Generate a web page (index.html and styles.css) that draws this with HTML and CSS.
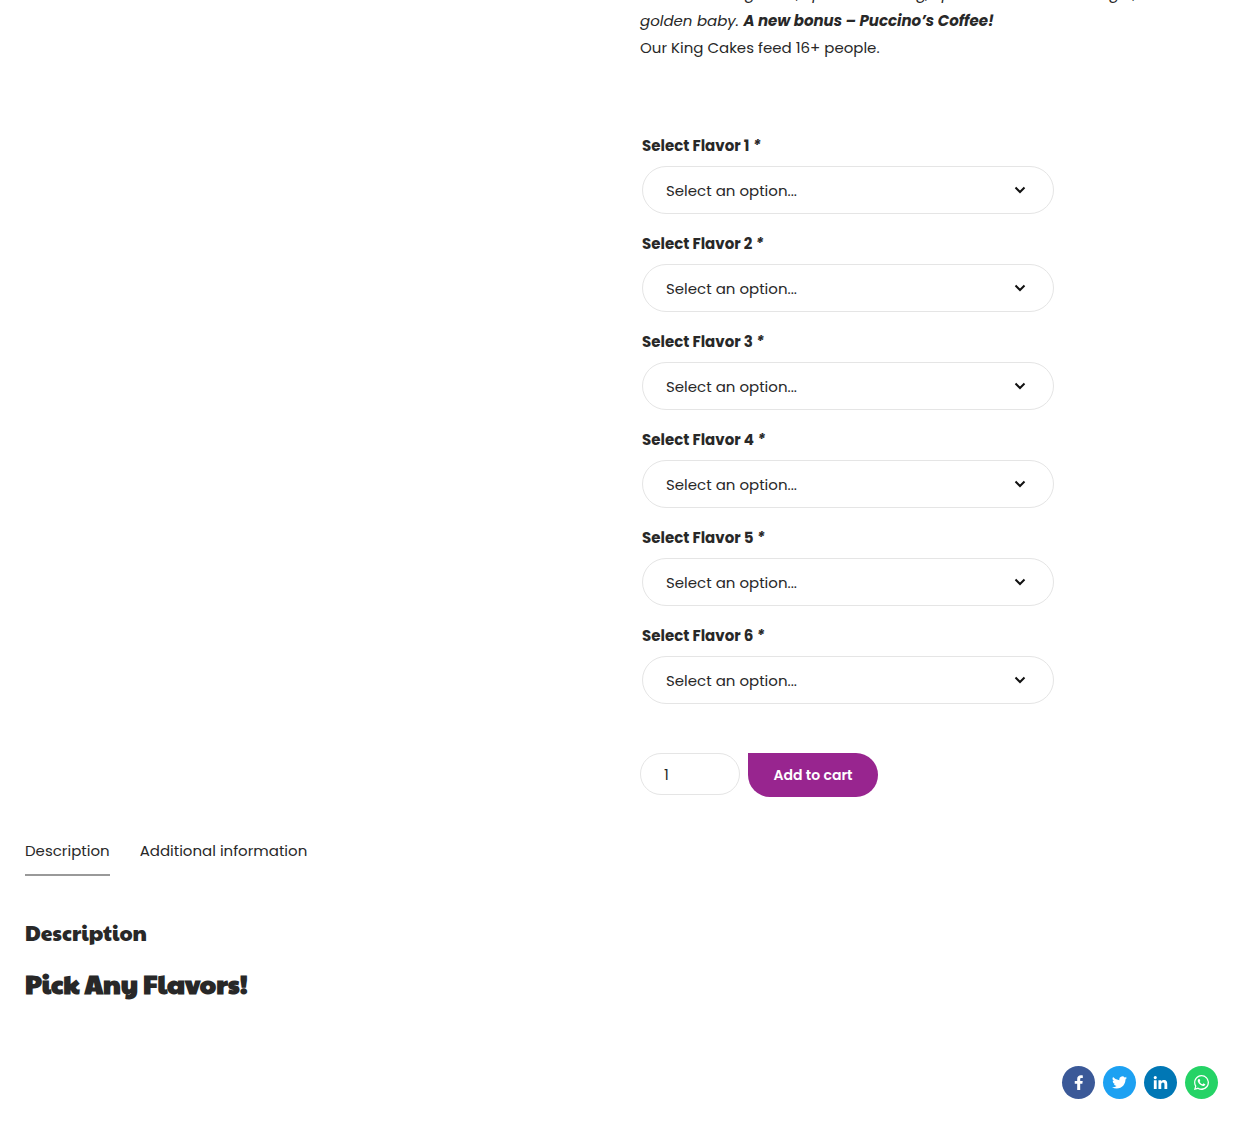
FILE: index.html
```html
<!DOCTYPE html>
<html lang="en">
<head>
<meta charset="utf-8">
<meta name="viewport" content="width=device-width, initial-scale=1">
<title>King Cake</title>
<link rel="stylesheet" href="styles.css">
</head>
<body>
<main class="page">
  <section class="product">
    <div class="summary">
      <div class="excerpt">
        <p><em>Cake with icing extra, sprinkles &amp; icing, special Mardi Gras &amp; a gift,<br>golden baby. <strong>A new bonus – Puccino’s Coffee!</strong></em></p>
        <p>Our King Cakes feed 16+ people.</p>
      </div>
      <form class="cart">
        <div class="field">
          <label for="flavor-1">Select Flavor 1 <em>*</em></label>
          <div class="select"><select id="flavor-1"><option>Select an option...</option></select><svg class="chevron" viewBox="0 0 12 8"><path d="M1.500 1.500 6 6l4.500-4.500"/></svg></div>
        </div>
        <div class="field">
          <label for="flavor-2">Select Flavor 2 <em>*</em></label>
          <div class="select"><select id="flavor-2"><option>Select an option...</option></select><svg class="chevron" viewBox="0 0 12 8"><path d="M1.500 1.500 6 6l4.500-4.500"/></svg></div>
        </div>
        <div class="field">
          <label for="flavor-3">Select Flavor 3 <em>*</em></label>
          <div class="select"><select id="flavor-3"><option>Select an option...</option></select><svg class="chevron" viewBox="0 0 12 8"><path d="M1.500 1.500 6 6l4.500-4.500"/></svg></div>
        </div>
        <div class="field">
          <label for="flavor-4">Select Flavor 4 <em>*</em></label>
          <div class="select"><select id="flavor-4"><option>Select an option...</option></select><svg class="chevron" viewBox="0 0 12 8"><path d="M1.500 1.500 6 6l4.500-4.500"/></svg></div>
        </div>
        <div class="field">
          <label for="flavor-5">Select Flavor 5 <em>*</em></label>
          <div class="select"><select id="flavor-5"><option>Select an option...</option></select><svg class="chevron" viewBox="0 0 12 8"><path d="M1.500 1.500 6 6l4.500-4.500"/></svg></div>
        </div>
        <div class="field">
          <label for="flavor-6">Select Flavor 6 <em>*</em></label>
          <div class="select"><select id="flavor-6"><option>Select an option...</option></select><svg class="chevron" viewBox="0 0 12 8"><path d="M1.500 1.500 6 6l4.500-4.500"/></svg></div>
        </div>
        <div class="buy">
          <input class="quantity" type="text" inputmode="numeric" value="1" aria-label="Quantity">
          <button class="add" type="submit">Add to cart</button>
        </div>
      </form>
    </div>
  </section>

  <nav class="tabs">
    <a class="tab active" href="#description">Description</a>
    <a class="tab" href="#additional">Additional information</a>
  </nav>
  <section class="description" id="description">
    <h2>Description</h2>
    <h1>Pick Any Flavors!</h1>
  </section>

  <div class="share">
    <a class="facebook" href="#facebook" aria-label="Facebook"><svg viewBox="0 0 16 16"><path d="M9.800 16V9.200h2.300l.4-2.900H9.800V4.700c0-.9.300-1.400 1.400-1.400h1.400V.5C12.300.4 11.500.3 10.600.3 8.300.3 6.600 1.600 6.600 4.200v2.100H4v2.900h2.600V16z"/></svg></a>
    <a class="twitter" href="#twitter" aria-label="Twitter"><svg viewBox="0 0 16 16"><path d="M16 3.040a6.500 6.500 0 0 1-1.890.52A3.300 3.300 0 0 0 15.560 1.740a6.600 6.600 0 0 1-2.080.8A3.280 3.280 0 0 0 7.880 5.530 9.320 9.320 0 0 1 1.110 2.100a3.280 3.280 0 0 0 1.020 4.380A3.260 3.260 0 0 1 .64 6.070v.04a3.280 3.280 0 0 0 2.640 3.220 3.200 3.200 0 0 1-1.480.05 3.280 3.280 0 0 0 3.070 2.280A6.590 6.590 0 0 1 0 13.020a9.290 9.290 0 0 0 5.030 1.480c6.040 0 9.340-5 9.340-9.340v-.42A6.700 6.700 0 0 0 16 3.040z"/></svg></a>
    <a class="linkedin" href="#linkedin" aria-label="LinkedIn"><svg viewBox="0 0 16 16"><path d="M.9 5.600h3V15h-3zM2.400 1a1.700 1.700 0 1 1 0 3.400A1.700 1.700 0 0 1 2.400 1zM5.800 5.600h2.900v1.300c.5-.9 1.500-1.500 2.900-1.500 3 0 3.600 1.900 3.600 4.500V15h-3v-4.600c0-1.100 0-2.500-1.600-2.500s-1.800 1.200-1.800 2.400V15h-3z"/></svg></a>
    <a class="whatsapp" href="#whatsapp" aria-label="WhatsApp"><svg viewBox="0 0 16 16"><path d="M13.600 2.300A7.850 7.850 0 0 0 8 0a7.930 7.930 0 0 0-6.870 11.890L0 16l4.200-1.100A7.930 7.930 0 0 0 13.600 2.300zM8 14.520a6.600 6.600 0 0 1-3.360-.92l-.24-.14-2.490.65.660-2.430-.16-.25A6.590 6.590 0 1 1 8 14.520zm3.610-4.930c-.2-.1-1.170-.58-1.350-.64-.18-.07-.32-.1-.45.1-.13.200-.51.640-.63.770-.11.130-.23.150-.43.050-.2-.1-.84-.31-1.590-.98-.59-.53-.98-1.180-1.100-1.380-.11-.2-.01-.31.090-.41.090-.09.200-.23.300-.35.100-.11.130-.2.200-.33.060-.13.030-.25-.02-.35-.05-.1-.45-1.070-.61-1.470-.16-.39-.33-.33-.45-.34h-.38c-.13 0-.35.050-.53.250-.18.200-.69.680-.69 1.650s.71 1.910.81 2.050c.1.130 1.400 2.130 3.380 2.990 1.990.85 1.990.57 2.350.53.360-.03 1.170-.48 1.340-.94.160-.46.160-.86.110-.94-.05-.08-.18-.13-.38-.23z"/></svg></a>
  </div>
</main>
</body>
</html>
```
FILE: styles.css
```css
* { box-sizing: border-box; }

body {
  margin: 0;
  background: #fff;
  color: #282828;
  font: 15px/27px Poppins, Inter, "Open Sans", sans-serif;
  overflow-x: hidden;
}

.page { padding: 0 25px; }

.product {
  display: grid;
  grid-template-columns: 1fr 1fr;
  column-gap: 30px;
}

.summary { grid-column: 2; }

/* The page starts part-way through the product excerpt. */
.excerpt { margin-top: -20px; }
.excerpt p { margin: 0; }

.cart { padding-top: 71px; }

.field {
  max-width: 416px;
  padding: 0 2px;
  margin-bottom: 16px;
}

.field label {
  display: block;
  margin-bottom: 7px;
  font-weight: 700;
}

.select { display: grid; align-items: center; }
.select > * { grid-area: 1 / 1; }

.select select {
  appearance: none;
  width: 100%;
  height: 48px;
  padding: 0 48px 0 23px;
  border: 1px solid #e5e5e5;
  border-radius: 24px;
  background: #fff;
  color: inherit;
  font: inherit;
}

.chevron {
  justify-self: end;
  width: 12px;
  height: 8px;
  margin-right: 28px;
  fill: none;
  stroke: #111;
  stroke-width: 2;
  pointer-events: none;
}

.buy {
  display: flex;
  align-items: flex-start;
  gap: 8px;
  padding-top: 33px;
}

.quantity {
  width: 100px;
  height: 42px;
  padding: 0 23px;
  border: 1px solid #e5e5e5;
  border-radius: 21px;
  color: inherit;
  font: inherit;
}

.add {
  width: 130px;
  height: 44px;
  padding: 0;
  border: 0;
  border-radius: 0 22px 22px 22px;
  background: #98258f;
  color: #fff;
  font: inherit;
  font-size: 14px;
  font-weight: 600;
}

.tabs {
  display: flex;
  gap: 30px;
  margin-top: 40px;
}

.tab {
  padding-bottom: 10px;
  border-bottom: 2px solid transparent;
  color: inherit;
  text-decoration: none;
}

.tab.active { border-color: #999; }

.description { padding-top: 43px; }

.description h1,
.description h2 {
  margin: 0;
  font-family: "Paytone One", Poppins, Inter, sans-serif;
}

.description h2 { font-size: 21px; font-weight: 400; line-height: 28px; }
.description h1 { margin-top: 18px; font-size: 26px; font-weight: 700; line-height: 36px; }

.share {
  display: flex;
  justify-content: flex-end;
  gap: 8px;
  padding: 65px 7px 36px 0;
}

.share a {
  display: grid;
  place-items: center;
  width: 33px;
  height: 33px;
  border-radius: 50%;
}

.share svg { width: 15px; height: 15px; fill: #fff; }

.facebook { background: #3b5998; }
.twitter { background: #1da1f2; }
.linkedin { background: #0077b5; }
.whatsapp { background: #25d366; }
```
